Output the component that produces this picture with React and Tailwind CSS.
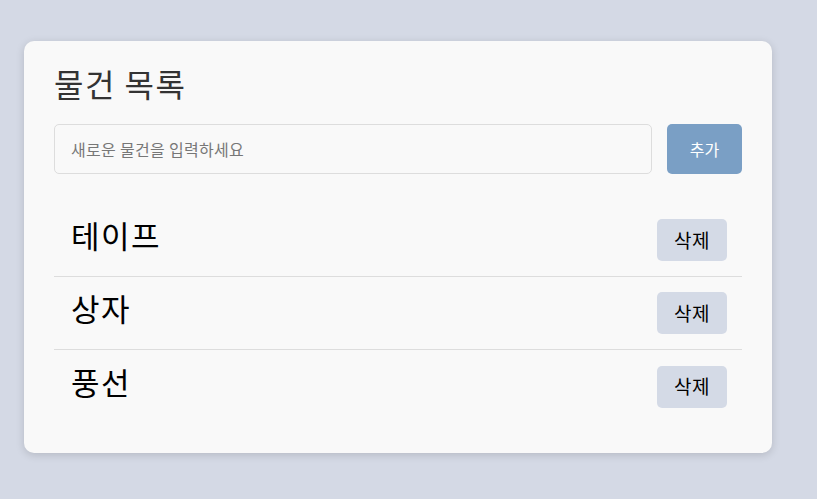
import React, { useState } from 'react';

const App = () => {
  const [items, setItems] = useState(['테이프', '상자', '풍선']);
  const [texto, setTexto] = useState('');

  const agregar = () => {
    if (!texto.trim()) return;
    setItems([...items, texto.trim()]);
    setTexto('');
  };

  const eliminar = (idx) => {
    setItems(items.filter((_, i) => i !== idx));
  };

  return (
    <div className="min-h-screen bg-[#d4d9e5] pt-[41px] pl-[24px] font-['Noto_Sans_CJK_KR',sans-serif]">
      <div className="w-[748px] bg-[#f9f9f9] rounded-[10px] shadow-[0_2px_8px_rgba(0,0,0,0.15)] p-[30px]">
        <h2 className="text-[32px] leading-[34px] text-[#333] -mt-[5px] mb-[24px] tracking-[1.5px]">물건 목록</h2>

        {/* 입력 영역 */}
        <div className="flex gap-[15px] mb-[30px]">
          <input
            type="text"
            value={texto}
            onChange={(e) => setTexto(e.target.value)}
            placeholder="새로운 물건을 입력하세요"
            className="flex-1 h-[50px] px-[16px] border border-[#dddddd] rounded-[5px] bg-[#f9f9f9] text-[16px] tracking-[0.3px] outline-none placeholder:text-[#777]"
          />
          <button
            onClick={agregar}
            className="w-[75px] h-[50px] bg-[#7a9fc5] text-white text-[16px] rounded-[5px]"
          >
            추가
          </button>
        </div>

        {/* 목록 */}
        <ul>
          {items.map((item, i) => (
            <li
              key={i}
              className={`flex items-center justify-between pl-[17px] pr-[15px] h-[73px] ${i < items.length - 1 ? 'border-b border-[#dddddd]' : ''}`}
            >
              <span className="text-[31px] leading-[40px] tracking-[1.5px] text-black mb-[10px]">{item}</span>
              <button
                onClick={() => eliminar(i)}
                className="w-[70px] h-[42px] bg-[#d4dae6] rounded-[5px] text-[19px] tracking-[0.5px] text-black"
              >
                삭제
              </button>
            </li>
          ))}
        </ul>
      </div>
    </div>
  );
};

export default App;
